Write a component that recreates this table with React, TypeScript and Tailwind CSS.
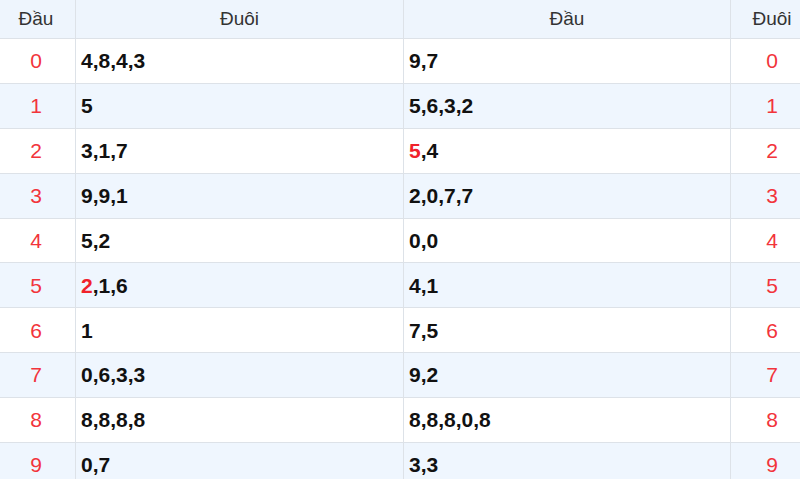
import React from "react";

type Part = { t: string; red?: boolean };
const rows: { d: string; tail: Part[]; head: Part[] }[] = [
  { d: "0", tail: [{ t: "4,8,4,3" }], head: [{ t: "9,7" }] },
  { d: "1", tail: [{ t: "5" }], head: [{ t: "5,6,3,2" }] },
  { d: "2", tail: [{ t: "3,1,7" }], head: [{ t: "5", red: true }, { t: ",4" }] },
  { d: "3", tail: [{ t: "9,9,1" }], head: [{ t: "2,0,7,7" }] },
  { d: "4", tail: [{ t: "5,2" }], head: [{ t: "0,0" }] },
  { d: "5", tail: [{ t: "2", red: true }, { t: ",1,6" }], head: [{ t: "4,1" }] },
  { d: "6", tail: [{ t: "1" }], head: [{ t: "7,5" }] },
  { d: "7", tail: [{ t: "0,6,3,3" }], head: [{ t: "9,2" }] },
  { d: "8", tail: [{ t: "8,8,8,8" }], head: [{ t: "8,8,8,0,8" }] },
  { d: "9", tail: [{ t: "0,7" }], head: [{ t: "3,3" }] },
];

function Parts({ parts }: { parts: Part[] }) {
  return (
    <>
      {parts.map((p, i) => (
        <span key={i} className={p.red ? "text-[#f0222b]" : "text-[#111111]"}>
          {p.t}
        </span>
      ))}
    </>
  );
}

export default function App() {
  return (
    <div className="w-[800px] h-[479px] overflow-hidden bg-white font-['Liberation_Sans',Arial,sans-serif]">
      <div className="w-[813px]">
        <div className="flex h-[39px] bg-[#eef5fd] border-b border-[#dde2e8] text-[19px] text-[#333333]">
          <div className="w-[76px] pr-[3px] border-r border-[#dde2e8] flex items-center justify-center">Đầu</div>
          <div className="w-[328px] border-r border-[#dde2e8] flex items-center justify-center">Đuôi</div>
          <div className="w-[327px] border-r border-[#dde2e8] flex items-center justify-center">Đầu</div>
          <div className="w-[82px] flex items-center justify-center">Đuôi</div>
        </div>
        {rows.map((r, i) => (
          <div
            key={r.d}
            className={`flex h-[44.9px] border-b border-[#dde2e8] ${i % 2 === 1 ? "bg-[#eff6fe]" : "bg-white"}`}
          >
            <div className="w-[76px] pr-[3px] border-r border-[#dde2e8] flex items-center justify-center text-[21px] text-[#f2343b]">
              {r.d}
            </div>
            <div className="w-[328px] border-r border-[#dde2e8] flex items-center pl-[5px] text-[21px] font-bold">
              <Parts parts={r.tail} />
            </div>
            <div className="w-[327px] border-r border-[#dde2e8] flex items-center pl-[5px] text-[21px] font-bold">
              <Parts parts={r.head} />
            </div>
            <div className="w-[82px] flex items-center justify-center text-[21px] text-[#f2343b]">{r.d}</div>
          </div>
        ))}
      </div>
    </div>
  );
}
